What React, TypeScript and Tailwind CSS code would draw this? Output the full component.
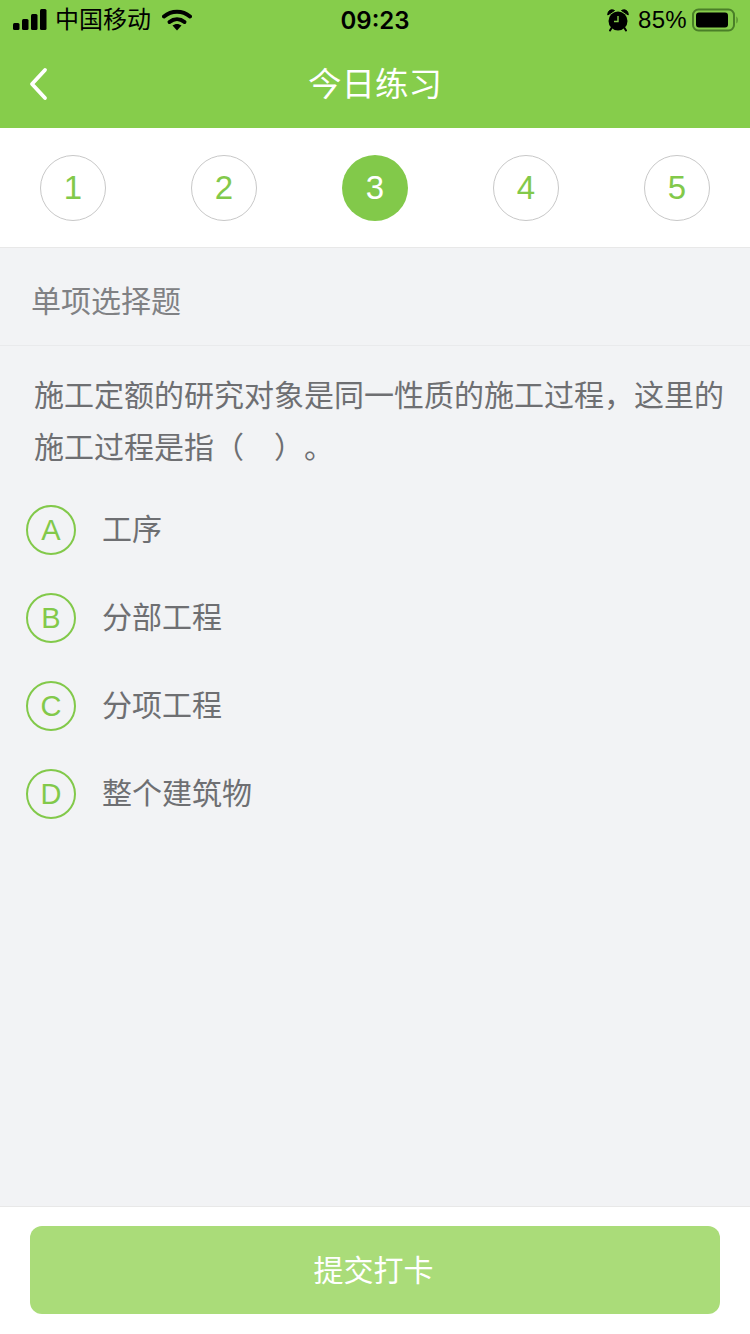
import React from 'react';

const steps = [1, 2, 3, 4, 5];
const options = [
    { key: 'A', label: '工序' },
    { key: 'B', label: '分部工程' },
    { key: 'C', label: '分项工程' },
    { key: 'D', label: '整个建筑物' },
];

const SignalIcon = () => (
    <svg width="34" height="22" viewBox="0 0 34 22" className="block">
        <rect x="0" y="14" width="6.5" height="7" rx="1.5" fill="#000" />
        <rect x="9" y="10" width="6.5" height="11" rx="1.5" fill="#000" />
        <rect x="18" y="5" width="6.5" height="16" rx="1.5" fill="#000" />
        <rect x="27" y="0" width="6.5" height="21" rx="1.5" fill="#000" />
    </svg>
);

const WifiIcon = () => (
    <svg width="30" height="22" viewBox="0 0 30 22" className="block">
        <path d="M2 7.5C9.5 1 20.5 1 28 7.5" fill="none" stroke="#000" strokeWidth="4" strokeLinecap="round" />
        <path d="M7.5 13C12 9.3 18 9.3 22.5 13" fill="none" stroke="#000" strokeWidth="4" strokeLinecap="round" />
        <path d="M10.5 16.5C13 14.4 17 14.4 19.5 16.5L15 21.5Z" fill="#000" />
    </svg>
);

const AlarmIcon = () => (
    <svg width="22" height="24" viewBox="0 0 22 24" className="block">
        <circle cx="11" cy="13" r="9.5" fill="#000" />
        <path d="M0.8 7C0.5 2.5 4.5 0.8 7.5 2.5Z" fill="#000" stroke="#000" strokeWidth="1" />
        <path d="M21.2 7C21.5 2.5 17.5 0.8 14.5 2.5Z" fill="#000" stroke="#000" strokeWidth="1" />
        <path d="M4.5 20L3 22.5M17.5 20L19 22.5" stroke="#000" strokeWidth="2" strokeLinecap="round" />
        <path d="M11 8V13.5H7" fill="none" stroke="#86cd4b" strokeWidth="1.4" />
    </svg>
);

const BatteryIcon = () => (
    <svg width="47" height="24" viewBox="0 0 47 24" className="block">
        <rect x="1" y="1.5" width="41" height="21" rx="5.5" fill="none" stroke="#4a7f28" strokeWidth="2" />
        <rect x="4" y="4.5" width="32" height="15" rx="3" fill="#000" />
        <path d="M44.5 8.5C46 9.5 46 14.5 44.5 15.5Z" fill="#4a7f28" />
    </svg>
);

const BackIcon = () => (
    <svg width="20" height="34" viewBox="0 0 20 34" className="block">
        <path d="M17 3L4 17L17 31" fill="none" stroke="#fff" strokeWidth="3.8" strokeLinecap="round" strokeLinejoin="round" />
    </svg>
);

export default function App() {
    return (
        <div className="w-[750px] h-[1334px] flex flex-col bg-[#f2f3f5] overflow-hidden font-['Liberation_Sans','Noto_Sans_CJK_SC',sans-serif]">
            <div className="h-[128px] bg-[#86cd4b] flex flex-col shrink-0">
                <div className="h-[40px] flex items-center relative pl-[13px] pr-[11px] text-black">
                    <SignalIcon />
                    <span className="ml-[8px] text-[24px] leading-none">中国移动</span>
                    <span className="ml-[11px]"><WifiIcon /></span>
                    <span className="absolute left-0 right-0 top-[9px] text-center text-[24px] leading-none font-['Inter'] font-semibold">09:23</span>
                    <div className="ml-auto flex items-center">
                        <AlarmIcon />
                        <span className="ml-[9px] text-[24px] leading-none tracking-[0.3px]">85%</span>
                        <span className="ml-[5px]"><BatteryIcon /></span>
                    </div>
                </div>
                <div className="flex-1 flex items-center relative pt-[2px]">
                    <span className="absolute left-[28px] top-[27px]"><BackIcon /></span>
                    <span className="w-full text-center text-[33.5px] leading-none text-white">今日练习</span>
                </div>
            </div>

            <div className="h-[120px] bg-white border-b border-[#e8e8e8] flex items-center justify-between px-[40px] pt-[1px] shrink-0">
                {steps.map(step => (
                    <div
                        key={step}
                        className={step === 3
                            ? 'w-[66px] h-[66px] rounded-full bg-[#82c94a] text-white flex items-center justify-center text-[33px]'
                            : 'w-[66px] h-[66px] rounded-full border border-[#c8c8c8] text-[#82c94a] flex items-center justify-center text-[33px]'}
                    >
                        {step}
                    </div>
                ))}
            </div>

            <div className="h-[98px] border-b border-[#e9eaec] flex items-center pl-[31px] pt-[10px] text-[30px] leading-none text-[#808184] shrink-0">
                单项选择题
            </div>

            <div className="pl-[34px] pr-[20px] pt-[24px] text-[30px] leading-[52px] text-[#6e6f72] [text-spacing-trim:space-all]">
                施工定额的研究对象是同一性质的施工过程，这里的施工过程是指（　）。
            </div>

            <div className="flex flex-col gap-[38px] pl-[26px] pt-[31px]">
                {options.map(option => (
                    <div key={option.key} className="flex items-center h-[50px]">
                        <div className="w-[50px] h-[50px] rounded-full border-2 border-[#82c94a] text-[#82c94a] flex items-center justify-center text-[29px] leading-none pt-[1px]">
                            {option.key}
                        </div>
                        <span className="ml-[26px] text-[30px] leading-none text-[#6e6f72]">{option.label}</span>
                    </div>
                ))}
            </div>

            <div className="mt-auto h-[128px] bg-white border-t border-[#e8e8e8] px-[30px] pt-[19px] shrink-0">
                <button className="w-full h-[88px] rounded-[12px] bg-[#aadc79] text-white text-[30px] leading-none flex items-center justify-center pr-[3px] pt-[1px]">
                    提交打卡
                </button>
            </div>
        </div>
    );
}
